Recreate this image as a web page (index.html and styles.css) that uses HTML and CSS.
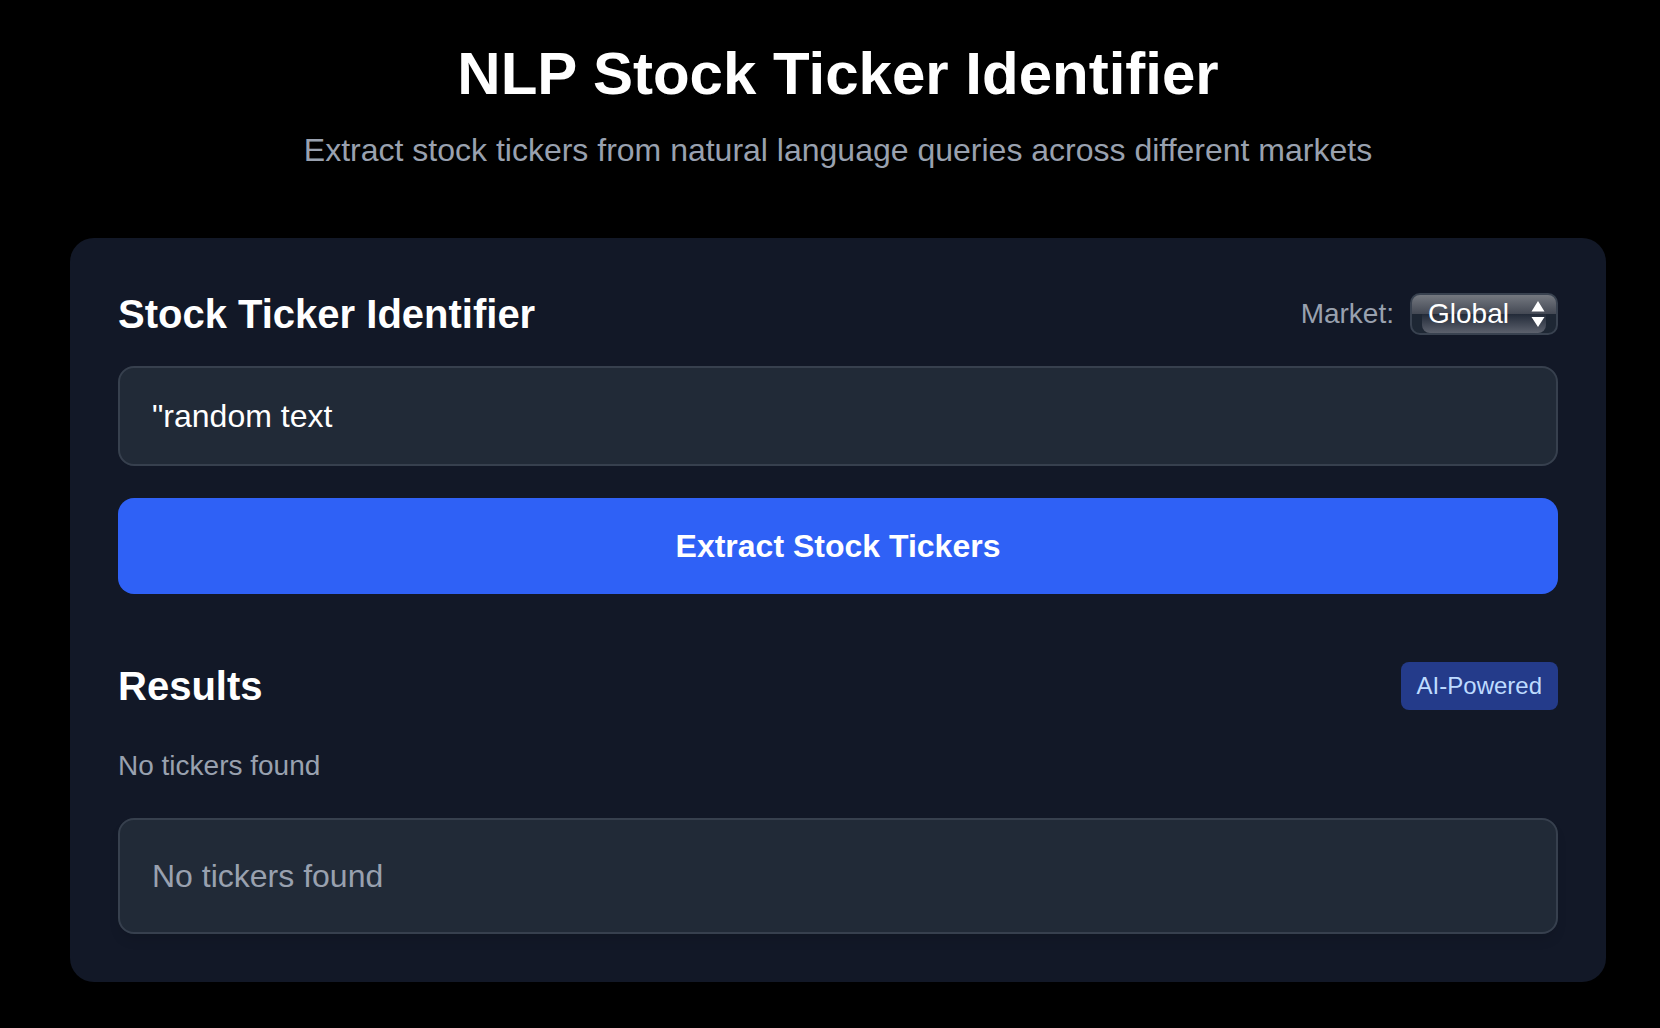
FILE: index.html
```html
<!DOCTYPE html>
<html lang="en">
<head>
<meta charset="utf-8">
<meta name="viewport" content="width=device-width, initial-scale=1">
<title>NLP Stock Ticker Identifier</title>
<link rel="stylesheet" href="styles.css">
</head>
<body>
<main class="page">
  <header class="intro">
    <h1 class="intro-title">NLP Stock Ticker Identifier</h1>
    <p class="intro-text">Extract stock tickers from natural language queries across different markets</p>
  </header>
  <div class="card">
    <form class="query">
      <div class="row">
        <h2 class="heading">Stock Ticker Identifier</h2>
        <div class="market">
          <label class="market-label" for="market">Market:</label>
          <div class="picker">
            <select class="picker-select" id="market">
              <option>Global</option>
            </select>
            <svg class="picker-arrows" viewBox="0 0 14 26" aria-hidden="true">
              <path d="M7 0 13.500 10.500H.5zM7 26 .5 16H13.500z" fill="#fff"/>
            </svg>
          </div>
        </div>
      </div>
      <input class="query-input" type="text" aria-label="Query" value="&quot;random text">
      <button class="query-button" type="button">Extract Stock Tickers</button>
    </form>
    <section class="results">
      <div class="row">
        <h2 class="heading">Results</h2>
        <span class="badge">AI-Powered</span>
      </div>
      <p class="results-status">No tickers found</p>
      <div class="results-box">No tickers found</div>
    </section>
  </div>
</main>
</body>
</html>
```
FILE: styles.css
```css
* {
  box-sizing: border-box;
}

body {
  margin: 0;
  background: #000;
  color: #fff;
  font-family: "Liberation Sans", Arial, sans-serif;
}

h1, h2, p {
  margin: 0;
}

.page {
  padding: 38px 54px 46px 70px;
}

.intro {
  margin-bottom: 64px;
  text-align: center;
}

.intro-title {
  margin-bottom: 16px;
  font-size: 60px;
  line-height: 72px;
}

.intro-text {
  color: #99a1af;
  font-size: 32px;
  line-height: 48px;
}

.card {
  padding: 48px;
  border-radius: 24px;
  background: #121827;
}

.row {
  display: flex;
  align-items: center;
  justify-content: space-between;
}

.heading {
  font-size: 40px;
  line-height: 56px;
}

.market {
  display: flex;
  align-items: center;
  gap: 16px;
}

.market-label {
  color: #99a1af;
  font-size: 28px;
  line-height: 40px;
}

.picker {
  position: relative;
  overflow: hidden;
  border: 2px solid #394250;
  border-radius: 10px;
  background: linear-gradient(#747880, #444954) top / 100% 50% no-repeat #1e2734;
}

/* Glossy lower half, inset from the sides */
.picker::before {
  content: "";
  position: absolute;
  inset: 50% 10px 0;
  border-radius: 0 0 8px 8px;
  background: linear-gradient(#222a38, #5c616d);
}

.picker-select {
  position: relative;
  display: block;
  width: 144px;
  height: 38px;
  padding: 0 36px 0 16px;
  border: 0;
  appearance: none;
  background: transparent;
  color: #fff;
  font: 28px/36px "Liberation Sans", Arial, sans-serif;
}

.picker-select option {
  background: #1e2734;
}

.picker-arrows {
  position: absolute;
  top: 6px;
  right: 11px;
  width: 14px;
  height: 26px;
  pointer-events: none;
}

.query-input {
  display: block;
  width: 100%;
  height: 100px;
  margin: 24px 0 32px;
  padding: 24px 32px;
  border: 2px solid #37404e;
  border-radius: 16px;
  background: #212a37;
  color: #fff;
  font: 32px/48px "Liberation Sans", Arial, sans-serif;
}

.query-button {
  display: block;
  width: 100%;
  padding: 24px 32px;
  border: 0;
  border-radius: 16px;
  background: #2f61f6;
  color: #fff;
  font: bold 32px/48px "Liberation Sans", Arial, sans-serif;
}

.results {
  margin-top: 64px;
}

.badge {
  padding: 8px 16px;
  border-radius: 8px;
  background: #243b8a;
  color: #bedbff;
  font-size: 24px;
  line-height: 32px;
}

.results-status {
  margin: 32px 0;
  color: #99a1af;
  font-size: 28px;
  line-height: 40px;
}

.results-box {
  padding: 32px;
  border: 2px solid #37404e;
  border-radius: 16px;
  background: #212a37;
  box-shadow: 0 8px 12px -2px rgba(0, 0, 0, 0.1);
  color: #99a1af;
  font-size: 32px;
  line-height: 48px;
}
```
